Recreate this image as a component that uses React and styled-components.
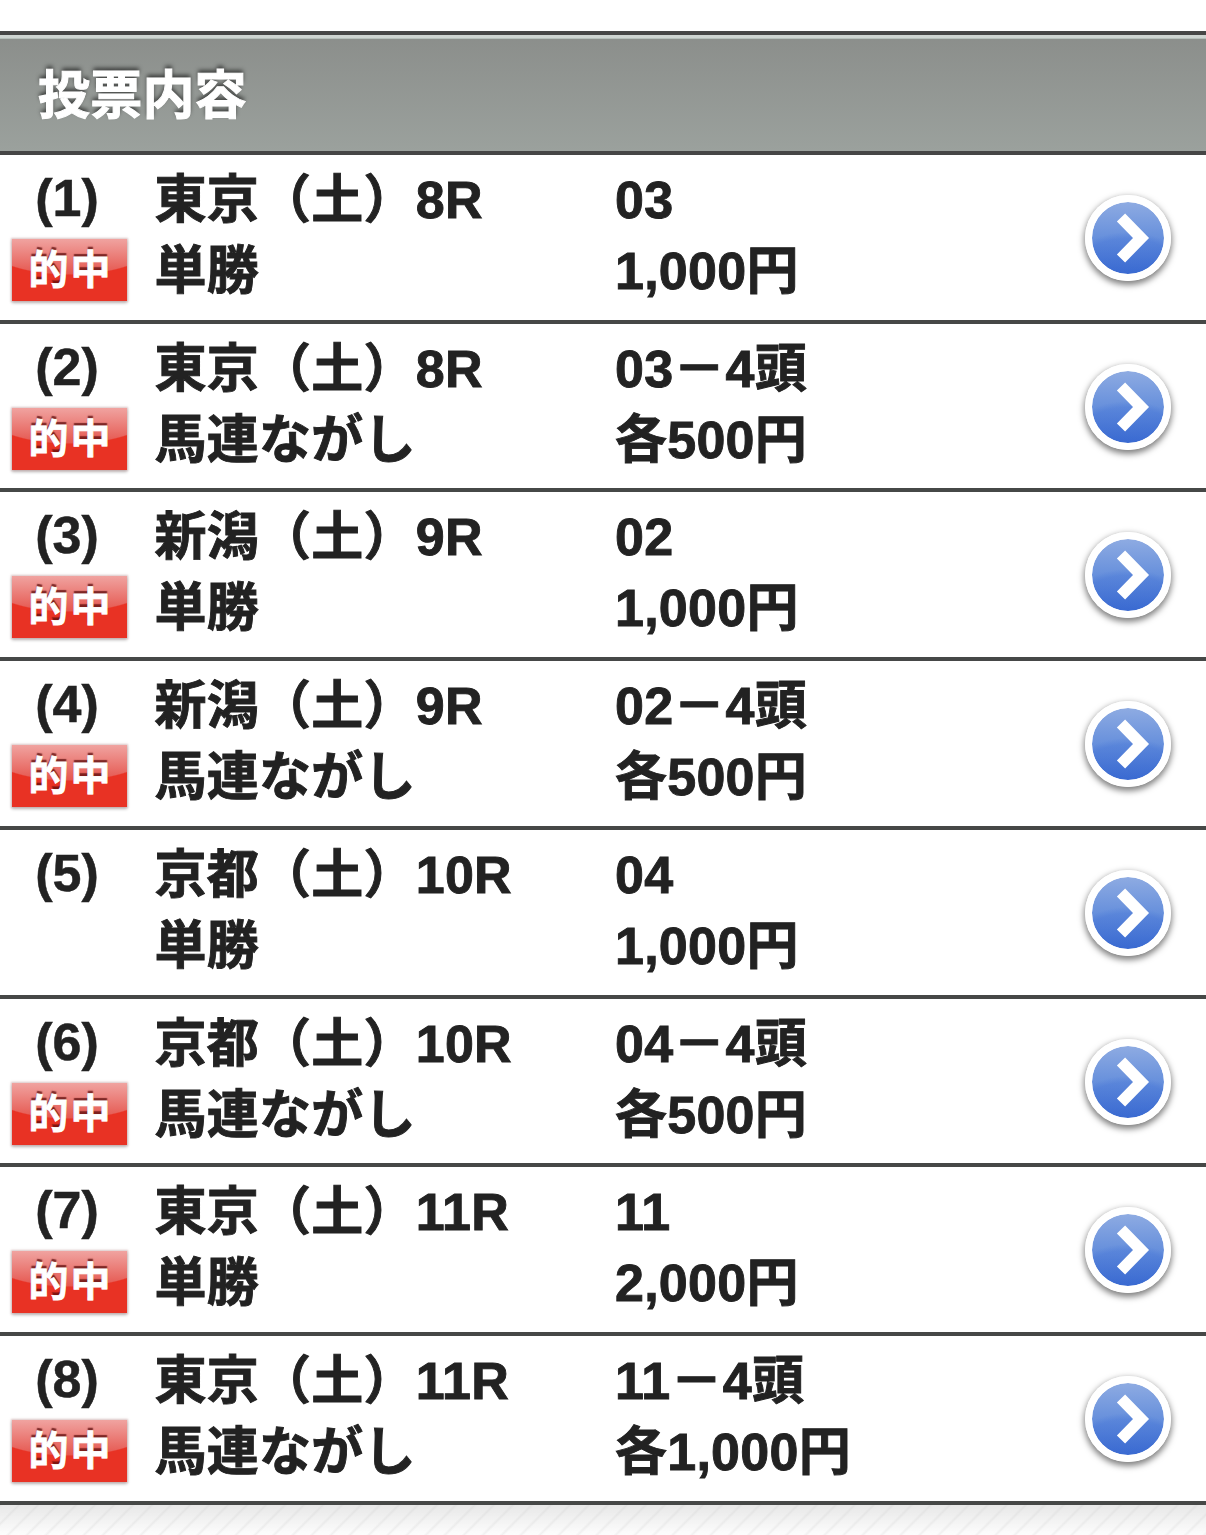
import React from "react";
import styled, { createGlobalStyle } from "styled-components";

const GlobalStyle = createGlobalStyle`
    *, *::before, *::after {
        box-sizing: border-box;
    }
    body {
        margin: 0;
        background: #fff;
        color: #222;
        font-family: "Liberation Sans", "Noto Sans CJK JP", sans-serif;
        font-size: 52px;
        font-weight: bold;
    }
`;

const Page = styled.div`
    display: flex;
    flex-direction: column;
    height: 1535px;
    padding-top: 31px;
    overflow: hidden;
`;

const Header = styled.header`
    flex: none;
    height: 124px;
    padding: 0 38px;
    border: solid #464646;
    border-width: 4px 0;
    background: linear-gradient(#8b8e8b, #9ba19d);
    box-shadow: inset 0 3px #ced4d1, inset 0 4px #b5bfba;
`;

const Title = styled.h1`
    margin: 0;
    padding-top: 3px;
    color: #fff;
    font-size: 52px;
    line-height: 116px;
    letter-spacing: 0.2px;
    text-shadow: 0 -3px 4px rgba(0, 0, 0, 0.6);
    -webkit-text-stroke: 1px #fff;
`;

const List = styled.ul`
    flex: none;
    margin: 0;
    padding: 0;
    list-style: none;
`;

const Row = styled.li`
    display: grid;
    grid-template-columns: 154.5px 460.5px 1fr 123px;
    height: 168.72px;
    padding-top: 10px;
    border-bottom: 4px solid #464847;
`;

const Status = styled.div`
    padding-left: 12px;
`;

const Number = styled.div`
    width: 110px;
    height: 74px;
    line-height: 66px;
    text-align: center;
    -webkit-text-stroke: 0.5px #222;
`;

const Cell = styled.div`
    line-height: 71px;
    letter-spacing: 0.25px;
    white-space: nowrap;
    -webkit-text-stroke: 0.9px #222;
`;

const Badge = styled.div`
    width: 115px;
    height: 62px;
    padding-left: 2px;
    background:
        radial-gradient(ellipse 90px 36px at 50% 0, transparent 97%, #e83224 100%),
        linear-gradient(#f0a3a0, #e5544c 36px);
    box-shadow: 0 0 2px 1px rgba(190, 150, 150, 0.55), 0 2px 3px rgba(0, 0, 0, 0.25);
    color: #fff;
    font-size: 40px;
    line-height: 63px;
    letter-spacing: 2px;
    text-align: center;
    text-shadow: 0 -3px 1px rgba(90, 10, 10, 0.75);
    -webkit-text-stroke: 0.8px #fff;
`;

const ArrowButton = styled.button`
    display: flex;
    align-items: center;
    justify-content: center;
    width: 86px;
    height: 86px;
    margin: 30px 0 0 2px;
    padding: 0;
    border: 7px solid #fff;
    border-radius: 50%;
    background:
        radial-gradient(ellipse 62px 42px at 50% 100%, rgba(62, 111, 214, 0.3) 85%, transparent 100%),
        linear-gradient(#8eabe2, #6790dc 50%, #3767cf);
    background-clip: padding-box;
    box-shadow: 0 3px 6px 1px rgba(0, 0, 0, 0.5);
`;

const Footer = styled.footer`
    flex: 1;
    background:
        linear-gradient(rgba(222, 222, 222, 0.65), rgba(255, 255, 255, 0.5)),
        repeating-linear-gradient(135deg, #e4e4e4 0, #fafafa 2px 11.4px, #e4e4e4 13.43px);
`;

const bets = [
    { race: "東京（土）8R", type: "単勝", pick: "03", amount: "1,000円", hit: true },
    { race: "東京（土）8R", type: "馬連ながし", pick: "03－4頭", amount: "各500円", hit: true },
    { race: "新潟（土）9R", type: "単勝", pick: "02", amount: "1,000円", hit: true },
    { race: "新潟（土）9R", type: "馬連ながし", pick: "02－4頭", amount: "各500円", hit: true },
    { race: "京都（土）10R", type: "単勝", pick: "04", amount: "1,000円", hit: false },
    { race: "京都（土）10R", type: "馬連ながし", pick: "04－4頭", amount: "各500円", hit: true },
    { race: "東京（土）11R", type: "単勝", pick: "11", amount: "2,000円", hit: true },
    { race: "東京（土）11R", type: "馬連ながし", pick: "11－4頭", amount: "各1,000円", hit: true },
];

const Arrow = () => (
    <ArrowButton aria-label="詳細">
        <svg width="72" height="72" viewBox="0 0 72 72">
            <path d="M29 15.5L49 36L29 56.5" fill="none" stroke="#fff" strokeWidth="11.5" />
        </svg>
    </ArrowButton>
);

const Bet = ({ number, race, type, pick, amount, hit }) => (
    <Row>
        <Status>
            <Number>({number})</Number>
            {hit && <Badge>的中</Badge>}
        </Status>
        <Cell>
            <div>{race}</div>
            <div>{type}</div>
        </Cell>
        <Cell>
            <div>{pick}</div>
            <div>{amount}</div>
        </Cell>
        <Arrow />
    </Row>
);

const App = () => (
    <Page lang="ja">
        <GlobalStyle />
        <Header>
            <Title>投票内容</Title>
        </Header>
        <List>
            {bets.map((bet, i) => (
                <Bet key={i} number={i + 1} {...bet} />
            ))}
        </List>
        <Footer />
    </Page>
);

export default App;
